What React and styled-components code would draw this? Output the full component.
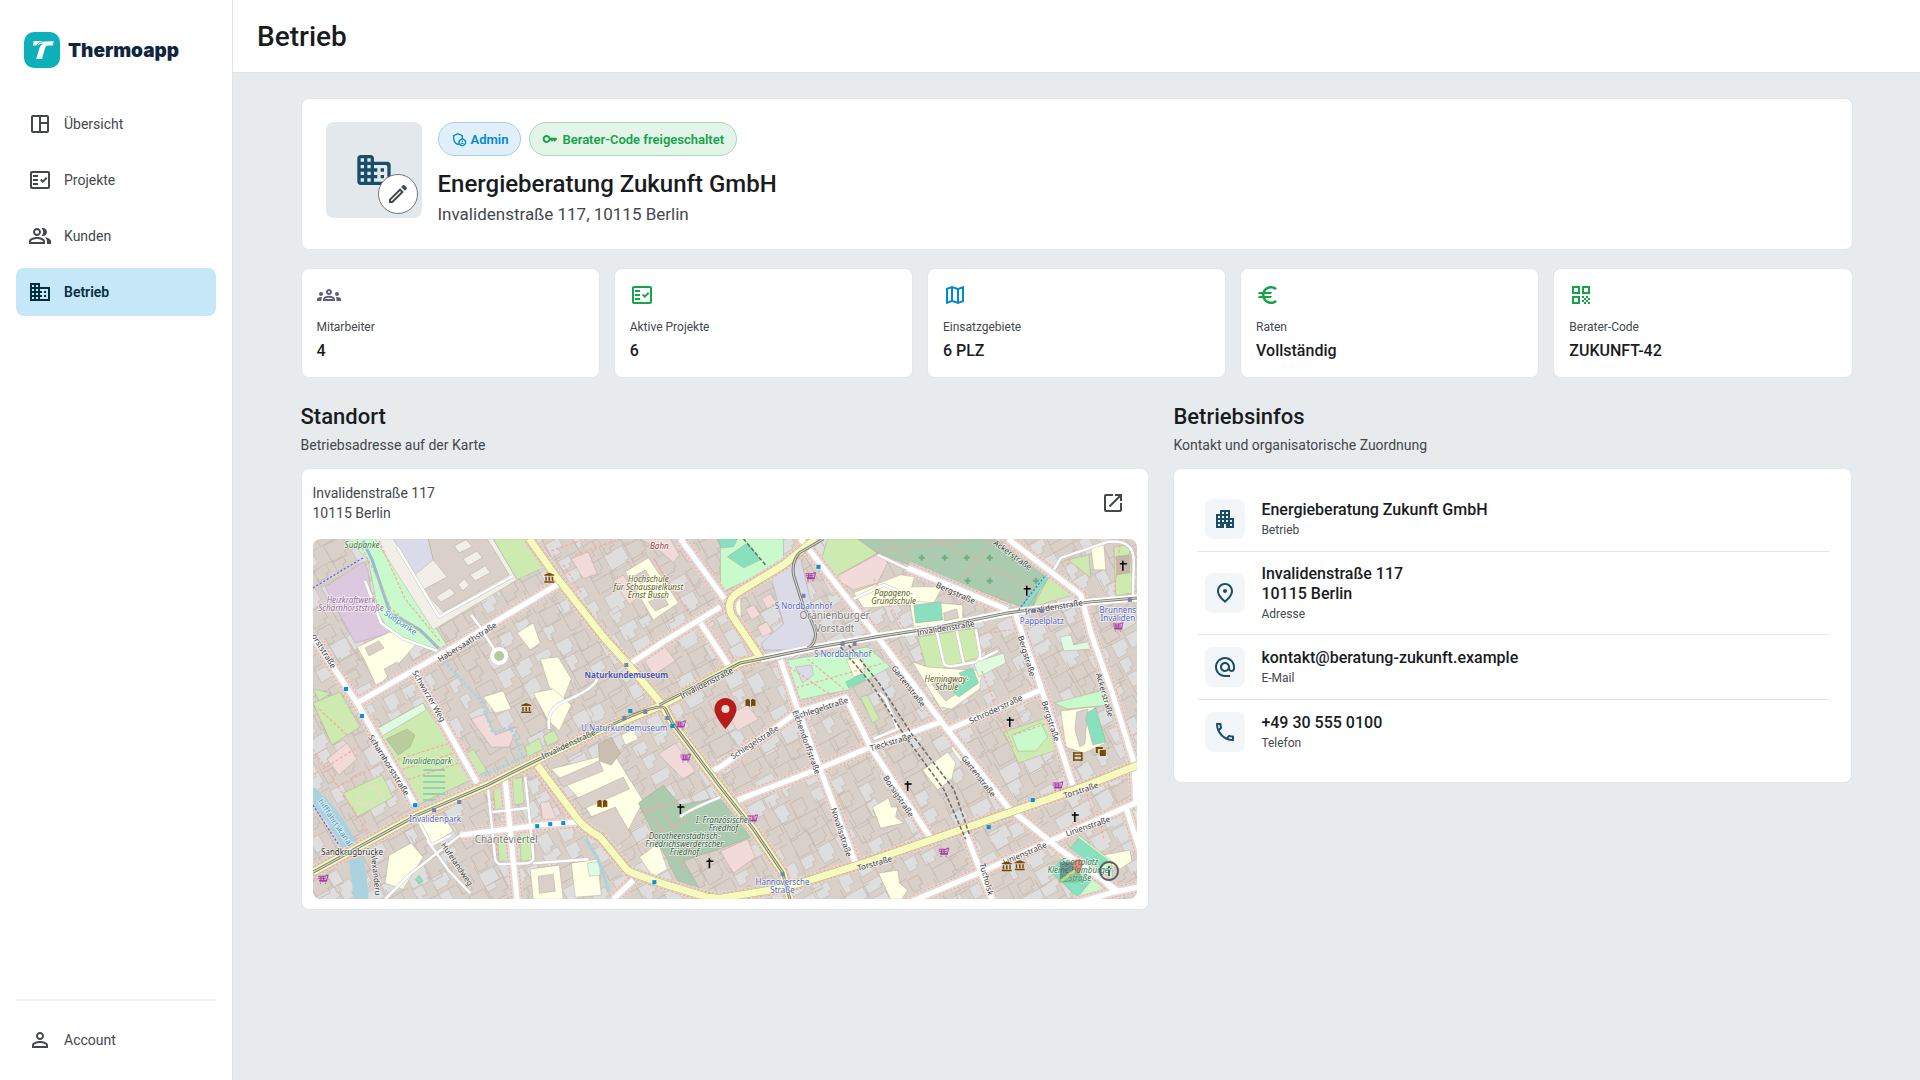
import styled, { createGlobalStyle } from "styled-components";
import {
  MdAlternateEmail,
  MdApartment,
  MdBusiness,
  MdEuro,
  MdKey,
  MdOpenInNew,
  MdOutlineAdminPanelSettings,
  MdOutlineEdit,
  MdOutlineFactCheck,
  MdOutlineGroups,
  MdOutlineInfo,
  MdOutlineMap,
  MdOutlinePeopleAlt,
  MdOutlinePhone,
  MdOutlinePlace,
  MdOutlineSpaceDashboard,
  MdPersonOutline,
  MdQrCode,
} from "react-icons/md";

const GlobalStyle = createGlobalStyle`
  *, *::before, *::after {
    box-sizing: border-box;
  }

  body {
    margin: 0;
    background: #e7ebee;
    color: #191c1f;
    font-family: Roboto, "Liberation Sans", sans-serif;
  }

  h1, h2, p, dl, dt, dd, ul, address {
    margin: 0;
    padding: 0;
    font-style: normal;
  }
`;

const Layout = styled.div`
  display: grid;
  grid-template-columns: 233px minmax(0, 1fr);
  min-height: 100vh;
`;

const Sidebar = styled.aside`
  display: flex;
  flex-direction: column;
  padding: 32px 16px 16px;
  background: #ffffff;
  border-right: 1px solid #e0e5e9;
`;

const Brand = styled.a`
  display: flex;
  align-items: center;
  gap: 8px;
  padding: 0 8px;
  margin-bottom: 32px;
  color: #10263f;
  font-family: Inter, sans-serif;
  font-size: 19px;
  font-weight: 900;
  text-decoration: none;
`;

const NavList = styled.ul`
  display: flex;
  flex-direction: column;
  gap: 8px;
  list-style: none;
`;

const NavLink = styled.a`
  display: flex;
  align-items: center;
  gap: 12px;
  height: 48px;
  padding: 0 12px;
  border-radius: 8px;
  background: ${(props) => (props.$active ? "#c5e7f7" : "transparent")};
  color: ${(props) => (props.$active ? "#042f42" : "#42484d")};
  font-size: 14px;
  font-weight: ${(props) => (props.$active ? 600 : 400)};
  text-decoration: none;

  svg {
    font-size: 24px;
  }
`;

const SidebarFooter = styled.div`
  margin-top: auto;
  padding-top: 15px;
  border-top: 2px solid #eef2f5;
`;

const Page = styled.div`
  display: flex;
  flex-direction: column;
`;

const TopBar = styled.header`
  display: flex;
  align-items: center;
  height: 73px;
  padding: 2px 24px 0;
  background: #ffffff;
  border-bottom: 1px solid #e0e5e9;
`;

const PageTitle = styled.h1`
  font-size: 28px;
  line-height: 36px;
  font-weight: 500;
`;

const Content = styled.main`
  display: flex;
  flex-direction: column;
  width: 100%;
  max-width: 1600px;
  margin: 0 auto;
  padding: 25px 24px 32px;
`;

const Card = styled.section`
  background: #ffffff;
  border: 1px solid #e2e7eb;
  border-radius: 8px;
`;

const ProfileCard = styled(Card)`
  display: flex;
  gap: 16px;
  padding: 23px 24px 21px;
  margin-bottom: 18px;
`;

const Avatar = styled.div`
  position: relative;
  display: flex;
  align-items: center;
  justify-content: center;
  width: 96px;
  height: 96px;
  border-radius: 8px;
  background: #e2e8ec;
  color: #184e68;
`;

const EditButton = styled.button`
  position: absolute;
  right: 4px;
  bottom: 4px;
  display: flex;
  align-items: center;
  justify-content: center;
  width: 40px;
  height: 40px;
  padding: 0;
  border: 1px solid #70787e;
  border-radius: 50%;
  background: #ffffff;
  color: #42484d;
  font-size: 24px;
`;

const ChipRow = styled.div`
  display: flex;
  gap: 8px;
  margin-bottom: 12px;
`;

const Chip = styled.span`
  display: flex;
  align-items: center;
  gap: 4px;
  height: 34px;
  padding: 0 12px;
  border: 1px solid ${(props) => (props.$tone === "green" ? "#a5dbb6" : "#9fd2ee")};
  border-radius: 17px;
  background: ${(props) => (props.$tone === "green" ? "#e3f4e8" : "#e0eff9")};
  color: ${(props) => (props.$tone === "green" ? "#16a34a" : "#0288d1")};
  font-size: 13px;
  font-weight: 600;

  svg {
    font-size: 16px;
  }
`;

const CompanyName = styled.h2`
  font-size: 24px;
  line-height: 32px;
  font-weight: 500;
`;

const CompanyAddress = styled.p`
  color: #42484d;
  font-size: 17px;
  line-height: 28px;
`;

const StatGrid = styled.dl`
  display: grid;
  grid-template-columns: repeat(5, minmax(0, 1fr));
  gap: 14px;
  margin-bottom: 25px;
`;

const StatCard = styled(Card).attrs({ as: "div" })`
  display: flex;
  flex-direction: column;
  padding: 14px 15px;
`;

const StatIcon = styled.span`
  display: flex;
  margin-bottom: 12px;
  color: ${(props) => props.$color};
  font-size: 24px;
`;

const StatLabel = styled.dt`
  margin-bottom: 4px;
  color: #42484d;
  font-size: 12px;
  line-height: 16px;
`;

const StatValue = styled.dd`
  font-size: 16px;
  line-height: 24px;
  font-weight: 500;
`;

const Columns = styled.div`
  display: grid;
  grid-template-columns: minmax(0, 5fr) minmax(0, 4fr);
  align-items: start;
  gap: 24px;
`;

const SectionHead = styled.header`
  margin-bottom: 13px;
`;

const SectionTitle = styled.h2`
  margin-bottom: 4px;
  font-size: 22px;
  line-height: 28px;
  font-weight: 500;
`;

const SectionText = styled.p`
  color: #42484d;
  font-size: 14px;
  line-height: 20px;
`;

const MapCard = styled(Card)`
  padding: 10px 11px;
`;

const MapHead = styled.div`
  display: flex;
  align-items: center;
  justify-content: space-between;
  margin-bottom: 12px;
`;

const MapAddress = styled.address`
  color: #42484d;
  font-size: 14px;
  line-height: 20px;
`;

const OpenLink = styled.a`
  display: flex;
  align-items: center;
  justify-content: center;
  width: 48px;
  height: 48px;
  color: #42484d;
  font-size: 24px;
`;

const MapFrame = styled.div`
  position: relative;
  height: 360px;
  overflow: hidden;
  border-radius: 8px;
`;

const MapSvg = styled.svg`
  display: block;
  width: 100%;
  height: 100%;
  font-family: "Noto Sans", sans-serif;
`;

const InfoButton = styled.button`
  position: absolute;
  right: 16px;
  bottom: 16px;
  display: flex;
  padding: 0;
  border: 0;
  background: none;
  color: #5c6062;
  font-size: 24px;
`;

const InfoCard = styled(Card)`
  padding: 18px 22px 18px 23px;
`;

const InfoRow = styled.div`
  display: flex;
  align-items: center;
  gap: 16px;
  padding: 12px 8px;

  & + & {
    border-top: 1px solid #e0e6ea;
  }
`;

const InfoIcon = styled.span`
  display: flex;
  align-items: center;
  justify-content: center;
  width: 40px;
  height: 40px;
  border-radius: 8px;
  background: #f2f6f9;
  color: #184e68;
  font-size: 24px;
`;

const InfoText = styled.dl`
  display: flex;
  flex-direction: column-reverse;
  gap: 2px;
`;

const InfoLabel = styled.dt`
  color: #42484d;
  font-size: 12px;
  line-height: 16px;
`;

const InfoValue = styled.dd`
  font-size: 16px;
  line-height: 20px;
  font-weight: 500;
  white-space: pre-line;
`;

const navItems = [
  { label: "Übersicht", icon: MdOutlineSpaceDashboard },
  { label: "Projekte", icon: MdOutlineFactCheck },
  { label: "Kunden", icon: MdOutlinePeopleAlt },
  { label: "Betrieb", icon: MdBusiness, active: true },
];

const stats = [
  { label: "Mitarbeiter", value: "4", icon: MdOutlineGroups, color: "#635b7d" },
  { label: "Aktive Projekte", value: "6", icon: MdOutlineFactCheck, color: "#16a34a" },
  { label: "Einsatzgebiete", value: "6 PLZ", icon: MdOutlineMap, color: "#0288d1" },
  { label: "Raten", value: "Vollständig", icon: MdEuro, color: "#16a34a" },
  { label: "Berater-Code", value: "ZUKUNFT-42", icon: MdQrCode, color: "#16a34a" },
];

const infos = [
  { label: "Betrieb", value: "Energieberatung Zukunft GmbH", icon: MdApartment },
  { label: "Adresse", value: "Invalidenstraße 117\n10115 Berlin", icon: MdOutlinePlace },
  { label: "E-Mail", value: "kontakt@beratung-zukunft.example", icon: MdAlternateEmail },
  { label: "Telefon", value: "+49 30 555 0100", icon: MdOutlinePhone },
];

// map colours
const PARK = "#c8facc";
const GRASS = "#cdebb0";
const CEMETERY = "#aacbaf";
const PITCH = "#88e0be";
const SCHOOL = "#ffffe5";
const PINK = "#f2dad9";
const RAIL = "#dadae8";
const BUILDING = "#d9d0c9";
const PLAIN = "#f2efe9";
const WATER = "#aad3df";
const PLAY = "#dffce2";

const areas = [
  [PARK, "34,0 62,0 124,91 135,108 125,114 87,98 67,81 55,21"],
  ["#dcc9df", "12,48 50,23 55,31 59,64 77,94 42,104"],
  [PLAIN, "62,0 180,0 204,41 120,91"],
  [BUILDING, "115,0 174,0 196,36 130,73 110,51 134,38 120,21"],
  [RAIL, "80,0 115,0 120,21 102,36"],
  [PLAIN, "141,7 153,1 159,8 146,14"],
  [PLAIN, "150,20 164,12 169,19 155,27"],
  [PLAIN, "157,36 172,27 177,34 162,42"],
  [PLAIN, "145,46 151,40 156,46 150,52"],
  [PLAIN, "123,58 137,49 142,55 128,63"],
  [GRASS, "180,0 214,0 230,29 204,41"],
  [SCHOOL, "44,108 77,93 104,104 64,149 52,122"],
  [BUILDING, "52,109 66,102 71,109 56,117"],
  [BUILDING, "71,130 84,123 90,132 76,141"],
  [SCHOOL, "312,33 335,19 365,64 340,81"],
  [BUILDING, "321,37 332,31 338,40 327,45"],
  [BUILDING, "335,63 350,56 355,66 342,72"],
  [PINK, "326,0 357,0 366,16 360,24 342,8"],
  [SCHOOL, "204,94 220,84 227,104 217,111"],
  [SCHOOL, "227,120 245,118 258,140 250,160 236,148"],
  [PINK, "258,20 275,13 284,35 270,40"],
  [PINK, "300,42 310,36 325,58 316,66"],
  [PINK, "330,120 352,108 362,122 340,136"],
  [SCHOOL, "408,62 427,52 428,96 416,82"],
  [PARK, "407,0 470,0 470,24 407,54"],
  [PITCH, "414,18 434,4 447,21 430,29"],
  [PITCH, "404,0 424,0 420,8 408,9"],
  [GRASS, "514,0 544,0 564,14 520,39 507,24"],
  [PINK, "520,39 567,14 574,24 564,44 540,51"],
  [CEMETERY, "544,0 680,0 732,36 717,71 697,64 564,14"],
  [GRASS, "735,38 760,56 719,68"],
  [PITCH, "729,36 735,39 712,70 705,72"],
  [SCHOOL, "540,54 587,36 601,38 598,48 629,48 620,64 550,69"],
  [SCHOOL, "596,62 649,66 649,84 600,88"],
  [PITCH, "600,66 627,63 629,81 602,84"],
  [BUILDING, "630,74 643,70 645,79 631,82"],
  [RAIL, "457,36 487,19 504,91 494,111 450,111 448,104 470,85"],
  [PINK, "432,70 440,66 447,76 438,81"],
  [PINK, "448,60 457,55 463,64 454,70"],
  [PINK, "444,88 453,83 459,93 449,98"],
  [GRASS, "604,98 664,89 667,118 614,134"],
  [PARK, "474,121 554,108 577,128 534,151 485,161"],
  [RAIL, "482,128 498,126 500,136 489,144"],
  [PITCH, "532,143 550,134 552,141 535,149"],
  [SCHOOL, "533,121 549,118 551,134 540,138"],
  [SCHOOL, "599,123 614,128 668,132 666,150 638,170 626,168"],
  [BUILDING, "618,145 640,138 650,150 632,162"],
  [PITCH, "645,134 659,129 665,144 645,158 638,151 652,142"],
  [PLAY, "660,124 690,114 692,124 665,138"],
  [GRASS, "754,21 775,16 777,39"],
  [SCHOOL, "777,9 790,6 792,31 780,31"],
  [GRASS, "800,8 815,6 820,54 802,57"],
  ["#c4b6ab", "802,18 815,16 816,34 803,36"],
  [PLAY, "746,98 757,96 760,106 777,102 778,110 750,112"],
  [PARK, "740,164 794,150 797,166 754,170"],
  [GRASS, "690,193 732,179 742,211 705,224"],
  [PARK, "698,196 727,184 734,198 722,212 704,212"],
  [SCHOOL, "747,172 780,168 792,204 770,214 752,208"],
  [BUILDING, "763,173 774,170 771,205 766,208 761,190"],
  [PITCH, "772,180 774,173 782,169 792,203 779,206"],
  [SCHOOL, "609,231 634,213 642,224 638,240 624,251"],
  [SCHOOL, "559,268 575,259 578,268 584,268 582,278 590,284 567,289"],
  [SCHOOL, "565,334 584,331 586,344 594,351 588,360 577,360"],
  [SCHOOL, "637,209 643,205 650,220 647,223"],
  [GRASS, "547,158 554,156 566,180 559,184"],
  [PINK, "415,176 434,166 445,180 424,192"],
  [PINK, "345,215 362,204 382,232 370,240"],
  [PINK, "407,312 434,300 442,318 420,334"],
  [SCHOOL, "789,316 816,311 818,322 806,330 795,325"],
  [PARK, "816,274 824,270 824,300"],
  [PARK, "748,340 765,296 797,321 800,350 764,362"],
  [PITCH, "765,299 794,321 764,358 737,333"],
  [GRASS, "0,164 27,153 47,188 19,206"],
  [GRASS, "0,150 18,154 6,162"],
  [GRASS, "65,189 110,164 160,240 104,266 80,225"],
  [PLAY, "65,189 110,164 113,171 69,197"],
  ["#b9cd9c", "73,200 94,190 102,196 97,208 85,216"],
  [PINK, "14,220 34,204 44,220 26,236"],
  [GRASS, "30,254 69,236 80,258 44,278"],
  [GRASS, "152,216 160,210 174,232 166,236"],
  [GRASS, "212,207 226,199 230,210 214,218"],
  [GRASS, "230,197 241,191 246,201 234,207"],
  [PINK, "158,180 172,175 182,196 204,188 196,208 178,208"],
  [SCHOOL, "170,158 190,152 198,170 182,174"],
  [SCHOOL, "220,154 240,150 258,166 246,192 234,180"],
  [SCHOOL, "238,230 300,214 330,262 310,300 300,310 268,262"],
  [BUILDING, "244,240 286,222 290,232 250,248"],
  [BUILDING, "262,260 310,238 316,250 270,270"],
  [BUILDING, "272,280 302,268 318,296 300,310"],
  [SCHOOL, "308,196 320,190 325,200 312,206"],
  ["#c9beb0", "285,205 298,198 307,214 298,226 286,222"],
  [CEMETERY, "325,264 350,246 367,266 407,258 430,282 437,298 400,312 370,321 387,351 364,341"],
  [GRASS, "180,250 190,247 192,268 182,271"],
  [GRASS, "199,240 209,238 211,264 201,266"],
  [GRASS, "184,296 198,294 199,322 186,322"],
  [GRASS, "206,292 220,290 222,320 208,322"],
  [PINK, "227,264 236,262 244,282 230,284"],
  [SCHOOL, "102,280 130,276 140,292 118,306"],
  [SCHOOL, "76,316 98,304 110,318 90,350 72,344"],
  [SCHOOL, "217,330 246,326 250,360 220,360"],
  [BUILDING, "225,337 240,335 242,352 226,354"],
  [SCHOOL, "258,324 284,320 288,356 262,358"],
  [SCHOOL, "326,318 345,304 354,330 340,338"],
  [PLAY, "274,324 286,322 287,336 276,337"],
  [PITCH, "102,340 106,336 110,342 106,345"],
];

const waters = [
  "M-4 254 Q22 275 36 306",
  "M43 320 Q47 340 48 362",
];

const whiteRoads = [
  "M247 44 L127 116 L44 164",
  "M0 98 L24 134 L44 164 L102 266",
  "M102 134 L164 244",
  "M315 126 L350 103 L407 68",
  "M367 0 L411 60",
  "M387 84 L416 128",
  "M487 0 L564 98 L604 151 L634 191 L694 268 L747 311 L806 353",
  "M594 29 L694 71 M702 76 L727 148 L759 246",
  "M694 0 L767 56 L777 94 L798 153 L820 223",
  "M394 234 L407 228 L484 173 L534 158",
  "M467 121 L485 173 L507 231 L542 324",
  "M424 261 L507 229 L557 208 L627 183",
  "M532 158 L557 208 L617 299",
  "M634 191 L727 151",
  "M594 364 L667 333 L734 303 L812 268 L824 263",
  "M652 294 L667 333 L679 362",
  "M812 268 L826 312 M820 223 L822 264",
  "M762 364 L800 353 L824 348 M785 336 L802 354",
  "M192 241 L204 362",
  "M147 296 L227 286 L264 283",
  "M300 360 L320 341",
];

const thinRoads = [
  "M740 31 L747 19 L794 3 Q819 0 820 21 L819 58",
  "M175 251 L182 320 Q184 326 190 325 L214 324 Q221 323 220 316 L212 238",
  "M179 273 L215 269",
  "M147 296 L98 334 L72 360",
  "M114 301 L136 332 L157 354",
  "M104 279 L118 306 L138 296",
  "M158 76 L167 88 L183 114",
  "M52 42 L68 84 L90 100 L124 112",
  "M84 8 L126 78 L200 37",
  "M623 92 L630 124 Q632 128 640 127 L662 123 Q668 120 666 112 L662 90 M643 92 L650 124",
  "M666 121 L684 112",
  "M564 16 L594 30 M540 60 L570 46 L584 52",
  "M367 278 Q372 272 407 258",
  "M236 190 Q232 170 252 162 Q280 150 284 140",
  "M220 324 L275 320",
  "M560 200 L584 190 L572 160 L566 154",
];

const yellowRoads = [
  "M216 0 L240 34 L290 98 L317 128 L349 166",
  "M0 333 L49 306 L104 276 L174 246 L220 223 L280 194 L320 178 L349 166 L427 124 L447 119",
  "M502 0 L470 26 L424 54 Q412 62 418 76 L447 119",
  "M349 166 L359 184 L407 248 L440 290 L469 333 L477 362",
  "M224 226 L260 274 Q268 288 287 298 L314 331 Q322 337 394 358 L407 359 L474 348 L544 326 L617 301 L697 273 L774 246 L824 226",
];

const tramLines = [
  "M0 333 L49 306 L104 276 L174 246 L220 223 L280 194 L320 176 Q349 164 352 170 L359 184 L407 248 L440 290 L469 333 L477 362",
  "M346 166 L427 124 L447 120 L500 109 L562 98 L620 89 L694 74 L777 63 L824 59",
  "M510 0 L486 14 Q478 22 480 36 L490 68 Q500 84 502 94 Q502 106 494 109",
];

const hiddenRails = "M527 108 L558 145 L590 195 L630 250 L652 300 M535 106 L566 145 L598 195 L640 250 L656 296 M430 0 L452 26";

const footways = [
  "M44 0 L60 30 L78 70 L130 112",
  "M66 2 L92 60 L128 104",
  "M238 12 L290 -6",
  "M80 222 L150 200 M84 232 L154 210 M90 242 L158 220",
  "M560 12 L650 2 M570 0 L640 60 M620 0 L720 50 M680 0 L640 50 L700 60",
  "M476 128 L520 158 M494 120 L530 150 M478 150 L570 124",
  "M330 260 L372 330 M340 256 L380 320 M326 274 L368 260 M336 296 L376 280 M350 320 L390 302",
  "M6 170 L36 198 M0 210 L60 300 M10 230 L48 206 M24 248 L66 226",
  "M560 40 L590 90 M660 96 L704 90 M668 132 L700 210",
  "M700 196 L740 182 M760 10 L752 30 M806 6 L800 56",
  "M262 16 L330 -8 M250 26 L268 54 M340 20 L380 80",
  "M180 254 L184 320 M212 246 L220 320 M222 236 L262 292",
  "M770 246 L780 276 M784 272 L790 300",
];

const streetLabels = [
  ["Habersaathstraße", 154, 103, -32],
  ["Invalidenstraße", 393, 144, -27],
  ["Invalidenstraße", 255, 205, -25],
  ["Invalidenstraße", 632, 89, -9],
  ["Invalidenstraße", 740, 68, -9],
  ["Scharnhorststraße", 76, 226, 58],
  ["Schwarzer Weg", 116, 157, 60],
  ["orststraße", 11, 112, 58],
  ["Bergstraße", 642, 54, 24],
  ["Ackerstraße", 699, 16, 36],
  ["Bergstraße", 713, 117, 73],
  ["Bergstraße", 737, 182, 72],
  ["Ackerstraße", 791, 156, 74],
  ["Gartenstraße", 595, 147, 52],
  ["Gartenstraße", 665, 237, 52],
  ["Schlegelstraße", 441, 203, -33],
  ["Schlegelstraße", 508, 169, -18],
  ["Tieckstraße", 577, 203, -17],
  ["Schröderstraße", 682, 170, -25],
  ["Eichendorffstraße", 493, 203, 70],
  ["Borsigstraße", 585, 257, 56],
  ["Novalisstraße", 528, 293, 72],
  ["Torstraße", 561, 324, -16],
  ["Torstraße", 767, 251, -18],
  ["Linienstraße", 711, 314, -23],
  ["Linienstraße", 774, 287, -19],
  ["Hufelandweg", 144, 325, 56],
  ["Alexanderu", 63, 335, 84],
  ["Tucholsk", 673, 340, 75],
];

const placeLabels = [
  ["#2d7a3c", 8, true, 49, 9, ["Südpanke"]],
  ["#9a6a9d", 8, true, 38, 64, ["Heizkraftwerk", "Scharnhorststraße"]],
  ["#8a3d44", 8, true, 346, 10, ["Bahn"]],
  ["#5b5e14", 8, true, 335, 43, ["Hochschule", "für Schauspielkunst", "Ernst Busch"]],
  ["#5b5e14", 8, true, 580, 57, ["Papageno-", "Grundschule"]],
  ["#5b5e14", 8, true, 633, 143, ["Hemingway-", "Schule"]],
  ["#2d7a3c", 8, true, 114, 225, ["Invalidenpark"]],
  ["#3a5b41", 8, true, 371, 300, ["Dorotheenstädtisch-", "Friedrichswerderscher", "Friedhof"]],
  ["#3a5b41", 8, true, 410, 284, ["I. Französischer", "Friedhof"]],
  ["#2a7d4e", 8, true, 766, 326, ["Sportplatz", "Kleine Hamburger", "Straße"]],
  ["#7a7a7a", 10, false, 521, 80, ["Oranienburger", "Vorstadt"]],
  ["#7a7a7a", 10, false, 193, 304, ["Charitéviertel"]],
  ["#5566c0", 8, false, 490, 70, ["S Nordbahnhof"]],
  ["#5566c0", 8, false, 529, 118, ["S Nordbahnhof"]],
  ["#5566c0", 8, false, 728, 85, ["Pappelplatz"]],
  ["#5566c0", 8, false, 804, 74, ["Brunnens", "Invaliden"]],
  ["#5566c0", 8, false, 311, 192, ["U Naturkundemuseum"]],
  ["#5566c0", 8, false, 122, 283, ["Invalidenpark"]],
  ["#5566c0", 8, false, 469, 346, ["Hannoversche", "Straße"]],
  ["#333333", 8, false, 39, 316, ["Sandkrugbrücke"]],
];

const blueStops = [
  [33, 150], [49, 177], [102, 266], [317, 172], [359, 187], [224, 287], [237, 285],
  [250, 284], [505, 28], [719, 261], [675, 288], [341, 343],
];
const tramStops = [
  [313, 126], [490, 57], [529, 105], [541, 105], [720, 72], [728, 72], [816, 61],
  [121, 271], [146, 263], [311, 179], [332, 173], [354, 179], [469, 335],
];
const crosses = [[713, 52], [809, 27], [696, 183], [594, 247], [761, 278], [367, 270], [396, 324]];
const museums = [[236, 39], [213, 169], [693, 327], [706, 326]];
const carts = [[497, 38], [804, 88], [367, 186], [372, 219], [439, 280], [744, 247], [630, 313], [10, 340]];

// Courtyards and house outlines between the streets, laid on a turned grid.
const buildHouses = () => {
  let seed = 17;
  const random = () => {
    seed = (seed * 16807) % 2147483647;
    return seed / 2147483647;
  };
  let yards = "";
  let outlines = "";
  for (let x = -260; x < 900; x += 22) {
    for (let y = -120; y < 820; y += 18) {
      const w = 10 + Math.round(random() * 12);
      const h = 7 + Math.round(random() * 8);
      const jx = x + Math.round(random() * 6);
      const jy = y + Math.round(random() * 5);
      const notch = 3 + Math.round(random() * 3);
      const shape = `M${jx} ${jy}h${w}v${h}h${-notch}v${notch}h${notch - w}z`;
      if (random() < 0.55) {
        yards += shape;
      } else {
        outlines += shape;
      }
      if (random() < 0.6) {
        outlines += `M${jx} ${jy}v-9M${jx + w} ${jy}h8`;
      }
    }
  }
  return { yards, outlines };
};

const houses = buildHouses();

const BrandMark = () => (
  <svg width="36" height="36" viewBox="0 0 36 36" aria-hidden="true">
    <rect width="36" height="36" rx="10" fill="#0cb0b9" />
    <path d="M9.600 9H19.500Q14.500 9.600 12.200 13.400H8.800Z" fill="#fff" />
    <path
      d="M13.200 13.400Q15.600 10 20.500 9.600L29.800 9.200L28.800 13.400H24Q21.800 13.400 21.200 15.400L18 27H12.200L15.600 15.600Q16.300 13 19.600 11.600Q15.600 11.800 13.200 13.400Z"
      fill="#fff"
    />
  </svg>
);

const CompanyIcon = () => (
  <svg width="40" height="40" viewBox="0 0 24 24" fill="currentColor" aria-hidden="true">
    <path d="M12 7V5c0-1.100-.9-2-2-2H4c-1.100 0-2 .9-2 2v14c0 1.100.9 2 2 2h16c1.100 0 2-.9 2-2V9c0-1.100-.9-2-2-2h-8zM6 19H4v-2h2v2zm0-4H4v-2h2v2zm0-4H4V9h2v2zm0-4H4V5h2v2zm4 12H8v-2h2v2zm0-4H8v-2h2v2zm0-4H8V9h2v2zm0-4H8V5h2v2zm9 12h-7v-2h2v-2h-2v-2h2v-2h-2V9h7c.55 0 1 .45 1 1v8c0 .55-.45 1-1 1zm-1-8h-2v2h2v-2zm0 4h-2v2h2v-2z" />
  </svg>
);

const StreetMap = () => (
  <MapSvg viewBox="0 0 824 360" preserveAspectRatio="xMidYMid slice" role="img" aria-label="Karte">
    <rect width="824" height="360" fill={BUILDING} />
    <g transform="rotate(-29 200 180)">
      <path d={houses.yards} fill="#dedede" stroke="#c9bdb3" strokeWidth="0.7" />
      <path d={houses.outlines} fill="none" stroke="#c6b9ae" strokeWidth="0.8" />
    </g>

    {areas.map(([fill, points]) => (
      <polygon key={points} points={points} fill={fill} stroke="#a99b8e" strokeWidth="0.4" />
    ))}
    <g stroke="#8fd3b0" strokeWidth="2">
      {[205, 211, 217, 223, 229, 235, 241].map((y) => (
        <path key={y} d={`M110 ${y + 20}h22`} />
      ))}
    </g>

    <g fill="none" stroke={WATER}>
      {waters.map((d) => (
        <path key={d} d={d} strokeWidth="15" />
      ))}
      <path d="M50 2 L59 21 L77 74 L107 91 L127 111" stroke="#8fbfd4" strokeWidth="3" />
      <path d="M107 134 L117 151 L165 239" strokeWidth="3" />
      <path d="M127 118 L167 161 L180 194 L197 188 L210 218 L167 238" strokeWidth="3" strokeDasharray="3 2" />
      <path d="M272 300 L284 318 L296 352" strokeWidth="3" />
    </g>

    <g fill="none" stroke="#f9a79e" strokeWidth="1.200" strokeDasharray="3 2">
      {footways.map((d) => (
        <path key={d} d={d} />
      ))}
    </g>
    <g fill="none" strokeLinejoin="round">
      {[...whiteRoads, ...yellowRoads].map((d) => (
        <path key={d} d={d} stroke="#dfd8d3" strokeWidth="13" />
      ))}
      {[...whiteRoads, ...yellowRoads].map((d) => (
        <path key={d} d={d} stroke="#f9a096" strokeWidth="11" strokeDasharray="2 2" />
      ))}
      {[...whiteRoads, ...yellowRoads].map((d) => (
        <path key={d} d={d} stroke="#e2dad5" strokeWidth="9" />
      ))}
      {thinRoads.map((d) => (
        <path key={d} d={d} stroke="#c9c5c2" strokeWidth="3.500" />
      ))}
      {thinRoads.map((d) => (
        <path key={d} d={d} stroke="#ffffff" strokeWidth="2.500" />
      ))}
      {whiteRoads.map((d) => (
        <path key={d} d={d} stroke="#ffffff" strokeWidth="5" />
      ))}
      <path d="M447 120 L500 109 L562 98 L620 89 L694 74 L777 63 L824 59" stroke="#ffffff" strokeWidth="7" />
      {yellowRoads.map((d) => (
        <path key={d} d={d} stroke="#b5b46a" strokeWidth="8" />
      ))}
      {yellowRoads.map((d) => (
        <path key={d} d={d} stroke="#f7fabf" strokeWidth="7" />
      ))}
      {tramLines.map((d) => (
        <path key={d} d={d} stroke="#777777" strokeWidth="3" />
      ))}
      {tramLines.map((d) => (
        <path key={d} d={d} stroke="#d5d5c4" strokeWidth="1.200" />
      ))}
      <path d={hiddenRails} stroke="#6b6b6b" strokeWidth="1.500" strokeDasharray="4 2" />
      <path d="M0 49 L50 19 M705 71 L732 36 M0 266 L26 306" stroke="#5a5aff" strokeWidth="1.200" strokeDasharray="2 2" />
      <circle cx="186" cy="117" r="7" fill="#b4ca9c" stroke="#ffffff" strokeWidth="4" />
      <ellipse cx="56" cy="257" rx="13" ry="7" stroke="#e6ddc5" strokeWidth="2" transform="rotate(-30 56 257)" />
    </g>

    <g fill="#4a9a5a" opacity="0.6">
      {[[608, 19], [631, 19], [653, 19], [676, 19], [699, 19], [654, 42], [676, 42], [722, 42]].map(([x, y]) => (
        <path key={`${x}-${y}`} d={`M${x - 1} ${y - 3}v6h2v-6zM${x - 3} ${y - 1}v2h6v-2z`} />
      ))}
    </g>

    <g fontSize="8" fill="#3a3a3a" textAnchor="middle" stroke="#ffffff" strokeWidth="1.500" strokeOpacity="0.7" paintOrder="stroke">
      {streetLabels.map(([label, x, y, angle]) => (
        <text key={`${label}${x}`} x={x} y={y} dy="3" transform={`rotate(${angle} ${x} ${y})`}>
          {label}
        </text>
      ))}
      <g fill="#3f8fb5">
        <text x="86" y="86" transform="rotate(34 86 86)">Südpanke</text>
        <text x="20" y="285" transform="rotate(56 20 285)">hifffahrtskanal</text>
      </g>
    </g>

    {blueStops.map(([x, y]) => (
      <rect key={`${x}-${y}`} x={x - 2} y={y - 2} width="4" height="4" fill="#0092da" />
    ))}
    {tramStops.map(([x, y]) => (
      <rect key={`${x}-${y}`} x={x - 2} y={y - 2} width="4" height="4" fill="#7981b0" />
    ))}
    {crosses.map(([x, y]) => (
      <path key={`${x}-${y}`} d={`M${x} ${y - 5}v10M${x - 3} ${y - 2}h7`} stroke="#000000" strokeWidth="1.500" />
    ))}
    {museums.map(([x, y]) => (
      <path
        key={`${x}-${y}`}
        transform={`translate(${x - 5} ${y - 5})`}
        d="M0 2L5 0L10 2V3H0ZM1 4h1.500v4H1ZM4.200 4h1.600v4H4.200ZM7.500 4H9v4H7.500ZM0 8.500h10V10H0Z"
        fill="#734a08"
      />
    ))}
    {carts.map(([x, y]) => (
      <path
        key={`${x}-${y}`}
        transform={`translate(${x - 5} ${y - 4})`}
        d="M0 1H7.500L8.500 0H10L8.500 6H1.500M0 3H8M1 5H8.500M3 1V6M5.500 1V6M2 8h1M7 8h1"
        fill="none"
        stroke="#ac39ac"
        strokeWidth="1"
      />
    ))}
    {[[289, 265], [437, 164]].map(([x, y]) => (
      <path
        key={`${x}-${y}`}
        transform={`translate(${x - 5} ${y - 4})`}
        d="M0 1Q3-1 4.500 1V8Q3 6 0 7ZM10 1Q7-1 5.500 1V8Q7 6 10 7Z"
        fill="#734a08"
      />
    ))}
    <path d="M760 213v9M768 213v9M760 214h8M760 217h8M760 221h8" stroke="#734a08" strokeWidth="1.500" />
    <path d="M782 208h7v2h-5v4h-2zM786 211h6v6h-6z" fill="#734a08" />

    {placeLabels.map(([fill, size, italic, x, y, lines]) => (
      <text
        key={`${lines[0]}${x}`}
        fill={fill}
        fontSize={size}
        fontStyle={italic ? "italic" : "normal"}
        textAnchor="middle"
        stroke="#ffffff"
        strokeWidth="1.500"
        strokeOpacity="0.7"
        paintOrder="stroke"
      >
        {lines.map((line, i) => (
          <tspan key={line} x={x} y={y + i * (size === 10 ? 13 : 8)}>
            {line}
          </tspan>
        ))}
      </text>
    ))}
    <text x="313" y="139" fontSize="8" fontWeight="700" fill="#4a55b0" textAnchor="middle" stroke="#ffffff" strokeOpacity="0.7" paintOrder="stroke">
      Naturkundemuseum
    </text>

    <g opacity="0.55">
      <rect x="746" y="323" width="18" height="20" fill="#3c5964" />
      <path d="M747 342L764 328L770 343Z" fill="#5fae7c" />
      <path d="M747 342L763 330" stroke="#f0d33c" strokeWidth="3" />
      <path d="M764 320a5 5 0 0 1 5 5c0 4-5 10-5 10s-5-6-5-10a5 5 0 0 1 5-5z" fill="#b5482f" />
    </g>
    <g transform="translate(412 159)">
      <path d="M0 0C-6 0-11 5-11 11C-11 19 0 31 0 31S11 19 11 11C11 5 6 0 0 0Z" fill="#b71c1c" />
      <circle cy="11" r="4" fill="#f2dad9" />
    </g>
  </MapSvg>
);

const App = () => {
  return (
    <>
      <GlobalStyle />
      <Layout>
        <Sidebar>
          <Brand href="#">
            <BrandMark />
            Thermoapp
          </Brand>
          <nav>
            <NavList>
              {navItems.map(({ label, icon: Icon, active }) => (
                <li key={label}>
                  <NavLink href="#" $active={active} aria-current={active ? "page" : undefined}>
                    <Icon />
                    {label}
                  </NavLink>
                </li>
              ))}
            </NavList>
          </nav>
          <SidebarFooter>
            <NavLink href="#">
              <MdPersonOutline />
              Account
            </NavLink>
          </SidebarFooter>
        </Sidebar>

        <Page>
          <TopBar>
            <PageTitle>Betrieb</PageTitle>
          </TopBar>
          <Content>
            <ProfileCard>
              <Avatar>
                <CompanyIcon />
                <EditButton type="button" aria-label="Logo bearbeiten">
                  <MdOutlineEdit />
                </EditButton>
              </Avatar>
              <div>
                <ChipRow>
                  <Chip>
                    <MdOutlineAdminPanelSettings />
                    Admin
                  </Chip>
                  <Chip $tone="green">
                    <MdKey />
                    Berater-Code freigeschaltet
                  </Chip>
                </ChipRow>
                <CompanyName>Energieberatung Zukunft GmbH</CompanyName>
                <CompanyAddress>Invalidenstraße 117, 10115 Berlin</CompanyAddress>
              </div>
            </ProfileCard>

            <StatGrid>
              {stats.map(({ label, value, icon: Icon, color }) => (
                <StatCard key={label}>
                  <StatIcon $color={color}>
                    <Icon />
                  </StatIcon>
                  <StatLabel>{label}</StatLabel>
                  <StatValue>{value}</StatValue>
                </StatCard>
              ))}
            </StatGrid>

            <Columns>
              <div>
                <SectionHead>
                  <SectionTitle>Standort</SectionTitle>
                  <SectionText>Betriebsadresse auf der Karte</SectionText>
                </SectionHead>
                <MapCard>
                  <MapHead>
                    <MapAddress>
                      Invalidenstraße 117
                      <br />
                      10115 Berlin
                    </MapAddress>
                    <OpenLink href="#" aria-label="Karte öffnen">
                      <MdOpenInNew />
                    </OpenLink>
                  </MapHead>
                  <MapFrame>
                    <StreetMap />
                    <InfoButton type="button" aria-label="Kartenquelle">
                      <MdOutlineInfo />
                    </InfoButton>
                  </MapFrame>
                </MapCard>
              </div>

              <div>
                <SectionHead>
                  <SectionTitle>Betriebsinfos</SectionTitle>
                  <SectionText>Kontakt und organisatorische Zuordnung</SectionText>
                </SectionHead>
                <InfoCard>
                  {infos.map(({ label, value, icon: Icon }) => (
                    <InfoRow key={label}>
                      <InfoIcon>
                        <Icon />
                      </InfoIcon>
                      <InfoText>
                        <InfoLabel>{label}</InfoLabel>
                        <InfoValue>{value}</InfoValue>
                      </InfoText>
                    </InfoRow>
                  ))}
                </InfoCard>
              </div>
            </Columns>
          </Content>
        </Page>
      </Layout>
    </>
  );
};

export default App;
